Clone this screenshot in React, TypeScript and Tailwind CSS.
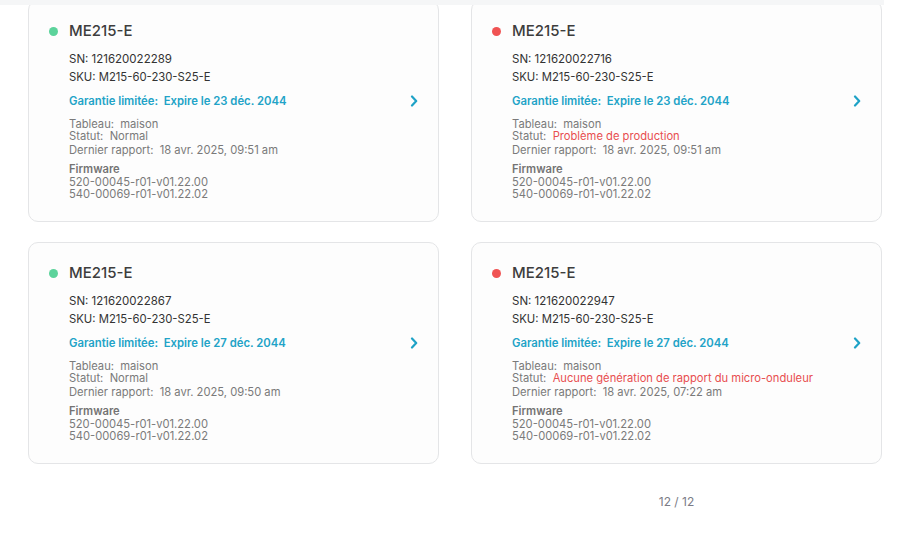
import React from "react";

type Card = {
  ok: boolean;
  sn: string;
  expire: string;
  status: string;
  report: string;
};

const cards: Card[] = [
  { ok: true, sn: "121620022289", expire: "Expire le 23 déc. 2044", status: "Normal", report: "18 avr. 2025, 09:51 am" },
  { ok: false, sn: "121620022716", expire: "Expire le 23 déc. 2044", status: "Problème de production", report: "18 avr. 2025, 09:51 am" },
  { ok: true, sn: "121620022867", expire: "Expire le 27 déc. 2044", status: "Normal", report: "18 avr. 2025, 09:50 am" },
  { ok: false, sn: "121620022947", expire: "Expire le 27 déc. 2044", status: "Aucune génération de rapport du micro-onduleur", report: "18 avr. 2025, 07:22 am" },
];

function Chevron() {
  return (
    <svg width="8" height="12" viewBox="0 0 8 12" fill="none">
      <path d="M2 1.5 L6.2 6 L2 10.5" stroke="#1ea2c6" strokeWidth="2.2" strokeLinecap="round" strokeLinejoin="round" />
    </svg>
  );
}

function DeviceCard({ c }: { c: Card }) {
  return (
    <div className="h-[222px] rounded-[10px] border border-[#e4e5e7] bg-[#fdfdfd] pt-[20px] pl-[20px] pr-[20px]">
      <div className="flex h-[20px] items-center">
        <span className={`h-[9px] w-[9px] rounded-full ${c.ok ? "bg-[#5cd39b]" : "bg-[#f05353]"}`} />
        <span className="ml-[11px] text-[15px] font-medium leading-[20px] text-[#3d3d3d]">ME215-E</span>
      </div>
      <div className="pl-[20px]">
        <div className="mt-[9px] text-[11.5px] leading-[18px] text-[#333333]">SN: {c.sn}</div>
        <div className="text-[11.3px] leading-[18px] text-[#333333]">SKU: M215-60-230-S25-E</div>
        <div className="mt-[6px] flex h-[18px] items-center justify-between">
          <span className="text-[11.3px] font-semibold leading-[18px] text-[#22a3c7]">
            Garantie limitée:&nbsp; {c.expire}
          </span>
          <Chevron />
        </div>
        <div className="mt-[8px] text-[11.2px] leading-[12px] text-[#7a7a7a]">Tableau:&nbsp; maison</div>
        <div className="text-[11.2px] leading-[12px] text-[#7a7a7a]">
          Statut:&nbsp; <span className={c.ok ? "text-[#7a7a7a]" : "text-[#e84e50]"}>{c.status}</span>
        </div>
        <div className="mt-[2px] text-[11.2px] leading-[12px] text-[#7a7a7a]">Dernier rapport:&nbsp; {c.report}</div>
        <div className="mt-[7px] text-[11.2px] font-semibold leading-[12px] text-[#737373]">Firmware</div>
        <div className="mt-[1px] text-[11.2px] leading-[12px] text-[#7a7a7a]">520-00045-r01-v01.22.00</div>
        <div className="text-[11.2px] leading-[12px] text-[#7a7a7a]">540-00069-r01-v01.22.02</div>
      </div>
    </div>
  );
}

export default function App() {
  return (
    <div
      className="relative h-[533px] w-[899px] overflow-hidden bg-white"
      style={{ fontFamily: "Inter, 'Liberation Sans', sans-serif" }}
    >
      <div className="absolute left-0 top-0 h-[5px] w-[884px] bg-[#f5f6f7]" />
      <div className="grid grid-cols-[411px_411px] gap-x-[32px] gap-y-[20px] pl-[28px] pt-0">
        {cards.map((c, i) => (
          <DeviceCard key={i} c={c} />
        ))}
        <div />
        <div className="mt-[10px] text-center text-[12px] leading-[16px] text-[#7b7c86]">12 / 12</div>
      </div>
    </div>
  );
}
